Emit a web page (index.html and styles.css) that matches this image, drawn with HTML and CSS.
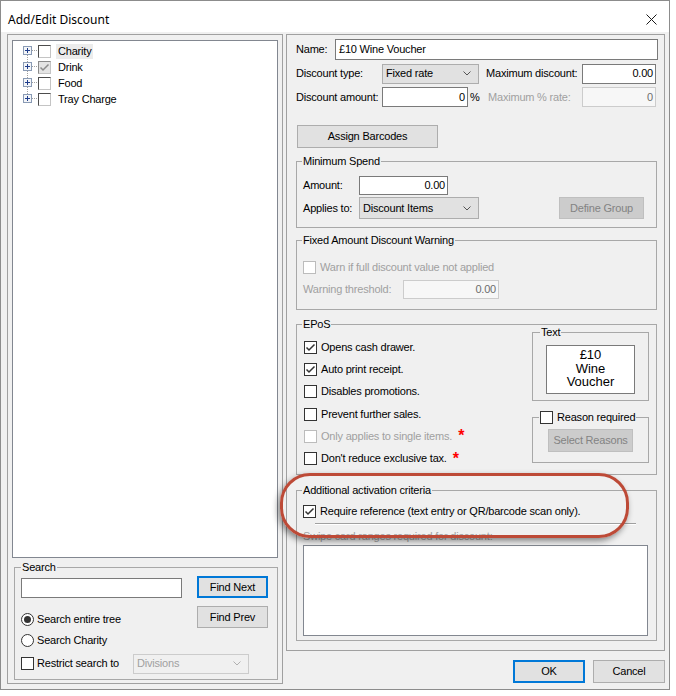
FILE: index.html
```html
<!DOCTYPE html>
<html lang="en">
<head>
<meta charset="utf-8">
<title>Add/Edit Discount</title>
<link rel="stylesheet" href="styles.css">
</head>
<body>
<div class="window">
  <div class="titlebar">
    <span class="title">Add/Edit Discount</span>
    <svg class="close" width="11" height="11" viewBox="0 0 11 11"><path d="M0.5 0.5L10.5 10.5M10.5 0.5L0.5 10.5" class="close-x"/></svg>
  </div>
  <div class="client">
    <div class="left-panel">
      <div class="tree">
        <div class="tree-row">
          <svg class="gutter" width="18" height="16" viewBox="0 0 18 16"><path d="M7.5 12v4M12 7.5h6" class="dots"/><rect x="3.5" y="3.5" width="8" height="8" class="exp"/><path d="M5 7.5h5M7.5 5v5" class="plus"/></svg>
          <span class="tcb"></span>
          <span class="tlabel sel">Charity</span>
        </div>
        <div class="tree-row">
          <svg class="gutter" width="18" height="16" viewBox="0 0 18 16"><path d="M7.5 0v3M7.5 12v4M12 7.5h6" class="dots"/><rect x="3.5" y="3.5" width="8" height="8" class="exp"/><path d="M5 7.5h5M7.5 5v5" class="plus"/></svg>
          <span class="tcb grey"><svg width="11" height="11" viewBox="0 0 11 11"><path d="M1.5 5.5L4 8L9.5 2.5" class="tick-grey"/></svg></span>
          <span class="tlabel">Drink</span>
        </div>
        <div class="tree-row">
          <svg class="gutter" width="18" height="16" viewBox="0 0 18 16"><path d="M7.5 0v3M7.5 12v4M12 7.5h6" class="dots"/><rect x="3.5" y="3.5" width="8" height="8" class="exp"/><path d="M5 7.5h5M7.5 5v5" class="plus"/></svg>
          <span class="tcb"></span>
          <span class="tlabel">Food</span>
        </div>
        <div class="tree-row">
          <svg class="gutter" width="18" height="16" viewBox="0 0 18 16"><path d="M7.5 0v3M12 7.5h6" class="dots"/><rect x="3.5" y="3.5" width="8" height="8" class="exp"/><path d="M5 7.5h5M7.5 5v5" class="plus"/></svg>
          <span class="tcb"></span>
          <span class="tlabel">Tray Charge</span>
        </div>
      </div>
      <fieldset class="group search-group">
        <legend>Search</legend>
        <div class="search-top">
          <div class="search-left">
            <div class="textbox search-box"></div>
            <div class="opt-row first-opt"><span class="radio on"></span><span class="opt-text">Search entire tree</span></div>
            <div class="opt-row"><span class="radio"></span><span class="opt-text">Search Charity</span></div>
          </div>
          <div class="search-right">
            <button class="btn default find">Find Next</button>
            <button class="btn find prev">Find Prev</button>
          </div>
        </div>
        <div class="restrict-row">
          <span class="cb"></span><span class="opt-text restrict-text">Restrict search to</span>
          <div class="combo disabled w-div"><span>Divisions</span><svg width="8" height="5" viewBox="0 0 8 5"><path d="M0.5 0.5L4 4L7.5 0.5" class="chev"/></svg></div>
        </div>
      </fieldset>
    </div>

    <div class="right-col">
      <div class="right-panel">
        <div class="row r-name">
          <span class="lbl w-name">Name:</span>
          <div class="textbox grow">£10 Wine Voucher</div>
        </div>
        <div class="row r-type">
          <span class="lbl w-86">Discount type:</span>
          <div class="combo w-type"><span>Fixed rate</span><svg width="8" height="5" viewBox="0 0 8 5"><path d="M0.5 0.5L4 4L7.5 0.5" class="chev"/></svg></div>
          <span class="lbl w-maxd">Maximum discount:</span>
          <div class="textbox num w-max">0.00</div>
        </div>
        <div class="row r-amt">
          <span class="lbl w-86">Discount amount:</span>
          <div class="textbox num w-amt">0</div>
          <span class="lbl w-pct">%</span>
          <span class="lbl dis w-maxr">Maximum % rate:</span>
          <div class="textbox num disabled w-max">0</div>
        </div>
        <button class="btn assign">Assign Barcodes</button>

        <fieldset class="group g-min">
          <legend>Minimum Spend</legend>
          <div class="row r-amount">
            <span class="lbl w-57">Amount:</span>
            <div class="textbox num w-89">0.00</div>
          </div>
          <div class="row r-applies">
            <span class="lbl w-57">Applies to:</span>
            <div class="combo w-120"><span>Discount Items</span><svg width="8" height="5" viewBox="0 0 8 5"><path d="M0.5 0.5L4 4L7.5 0.5" class="chev"/></svg></div>
            <button class="btn disabled define">Define Group</button>
          </div>
        </fieldset>

        <fieldset class="group g-fixed">
          <legend>Fixed Amount Discount Warning</legend>
          <div class="opt-row chk-row"><span class="cb disabled"></span><span class="opt-text dis">Warn if full discount value not applied</span></div>
          <div class="row r-thresh">
            <span class="lbl dis w-101">Warning threshold:</span>
            <div class="textbox num disabled w-96">0.00</div>
          </div>
        </fieldset>

        <fieldset class="group g-epos">
          <legend>EPoS</legend>
          <div class="epos-body">
            <div class="epos-list">
              <div class="opt-row epos-row"><span class="cb"><svg width="11" height="11" viewBox="0 0 11 11"><path d="M1.5 5.5L4 8L9.5 2.5" class="tick"/></svg></span><span class="opt-text">Opens cash drawer.</span></div>
              <div class="opt-row epos-row"><span class="cb"><svg width="11" height="11" viewBox="0 0 11 11"><path d="M1.5 5.5L4 8L9.5 2.5" class="tick"/></svg></span><span class="opt-text">Auto print receipt.</span></div>
              <div class="opt-row epos-row"><span class="cb"></span><span class="opt-text">Disables promotions.</span></div>
              <div class="opt-row epos-row"><span class="cb"></span><span class="opt-text">Prevent further sales.</span></div>
              <div class="opt-row epos-row"><span class="cb disabled"></span><span class="opt-text dis">Only applies to single items.</span><span class="req">*</span></div>
              <div class="opt-row epos-row"><span class="cb"></span><span class="opt-text">Don't reduce exclusive tax.</span><span class="req">*</span></div>
            </div>
            <div class="epos-side">
              <fieldset class="group g-text">
                <legend>Text</legend>
                <div class="text-preview">£10<br>Wine<br>Voucher</div>
              </fieldset>
              <fieldset class="group g-reason">
                <legend class="chk-legend"><span class="cb"></span><span class="opt-text">Reason required</span></legend>
                <button class="btn disabled reasons">Select Reasons</button>
              </fieldset>
            </div>
          </div>
        </fieldset>

        <fieldset class="group g-add">
          <legend>Additional activation criteria</legend>
          <div class="opt-row chk-row add-row"><span class="cb"><svg width="11" height="11" viewBox="0 0 11 11"><path d="M1.5 5.5L4 8L9.5 2.5" class="tick"/></svg></span><span class="opt-text">Require reference (text entry or QR/barcode scan only).</span></div>
          <div class="separator"></div>
          <div class="swipe-label dis">Swipe card ranges required for discount:</div>
          <div class="listbox"></div>
        </fieldset>
      </div>
      <div class="dialog-buttons">
        <button class="btn default dlg">OK</button>
        <button class="btn dlg">Cancel</button>
      </div>
    </div>
  </div>
  <div class="callout"></div>
</div>
</body>
</html>
```

FILE: styles.css
```css
* { box-sizing: border-box; }
html, body { margin: 0; padding: 0; background: #fff; }
body {
  font-family: "Liberation Sans", Arial, sans-serif;
  font-size: 11px;
  line-height: 13px;
  letter-spacing: -0.2px;
  color: #000;
}
button {
  font: inherit;
  letter-spacing: inherit;
  color: inherit;
  margin: 0;
  padding: 0;
  cursor: default;
}

.window {
  position: relative;
  width: 670px;
  height: 690px;
  border: 1px solid #8c8c8c;
  background: #f0f0f0;
  display: flex;
  flex-direction: column;
}
.titlebar {
  flex: none;
  height: 31px;
  background: #fff;
  display: flex;
  align-items: center;
  justify-content: space-between;
  padding: 6px 12px 0 7px;
}
.title {
  font-family: "Noto Sans", "Liberation Sans", sans-serif;
  font-size: 12px;
  line-height: 16px;
  letter-spacing: 0;
}
.close { display: block; }
.close-x { stroke: #1a1a1a; stroke-width: 1; fill: none; }

.client {
  flex: 1;
  display: flex;
  align-items: flex-start;
  gap: 3px;
  padding: 2px 0 0 6px;
}

/* ---------- left panel ---------- */
.left-panel {
  width: 276px;
  height: 650px;
  flex: none;
  border: 1px solid #a0a0a0;
  padding: 5px 4px 0;
  display: flex;
  flex-direction: column;
}
.tree {
  height: 518px;
  flex: none;
  background: #fff;
  border: 1px solid #828790;
  padding: 2px 0 0 7px;
}
.tree-row { display: flex; align-items: center; height: 16px; }
.gutter { display: block; flex: none; }
.dots { stroke: #a0a0a0; stroke-dasharray: 1 1; fill: none; }
.exp { fill: #f3f5f8; stroke: #8a9bb5; }
.plus { stroke: #1f3d8c; fill: none; }
.tcb {
  width: 13px;
  height: 13px;
  flex: none;
  border: 1px solid;
  border-color: #4d4d4d #c4c4c4 #c4c4c4 #4d4d4d;
  background: #fff;
  display: flex;
  align-items: center;
  justify-content: center;
}
.tcb.grey { background: #e4e4e4; border-color: #8a8a8a #c4c4c4 #c4c4c4 #8a8a8a; }
.tcb svg, .cb svg { display: block; }
.tick-grey { stroke: #8c8c8c; stroke-width: 1.5; fill: none; }
.tlabel { margin-left: 5px; padding: 1px 2px; line-height: 13px; }
.tlabel.sel { background: #ececec; }

/* ---------- group boxes ---------- */
.group {
  margin: 0;
  min-width: 0;
  border: 1px solid #a8a8a8;
  padding: 0 6px 6px 5px;
}
.group > legend {
  padding: 0 1px;
  line-height: 13px;
}

.search-group { margin: 3px 0 0 2px; width: 264px; padding: 2px 6px 6px 6px; }
.search-top { display: flex; gap: 15px; }
.search-left { width: 161px; }
.search-box { margin-top: 2px; height: 19px; }
.first-opt { margin-top: 13px; }
.search-left .opt-row + .opt-row { margin-top: 5px; }
.search-right { width: 71px; display: flex; flex-direction: column; }
.find { height: 22px; }
.prev { margin-top: 8px; }
.restrict-row { display: flex; align-items: center; height: 19px; margin-top: 6px; }
.restrict-text { width: 96px; }
.w-div { width: 116px; height: 19px; }

/* ---------- controls ---------- */
.textbox {
  background: #fff;
  border: 1px solid #7a7a7a;
  height: 20px;
  padding: 0 3px;
  display: flex;
  align-items: center;
  white-space: nowrap;
}
.textbox.num { justify-content: flex-end; padding-right: 2px; }
.textbox.disabled { border-color: #cccccc; background: #f7f7f7; color: #6d6d6d; }
.combo {
  background: #e1e1e1;
  border: 1px solid #adadad;
  height: 20px;
  padding: 0 7px 0 3px;
  display: flex;
  align-items: center;
  justify-content: space-between;
  white-space: nowrap;
}
.combo svg { display: block; }
.chev { stroke: #555; fill: none; }
.combo.disabled { background: #f0f0f0; border-color: #cccccc; color: #a0a0a0; }
.combo.disabled .chev { stroke: #b0b0b0; }
.btn {
  background: #e1e1e1;
  border: 1px solid #adadad;
  text-align: center;
  white-space: nowrap;
}
.btn.default { border: 2px solid #0078d7; }
.btn.disabled { background: #cccccc; border-color: #bfbfbf; color: #838383; }

.cb {
  width: 13px;
  height: 13px;
  flex: none;
  border: 1px solid #333;
  background: #fff;
  display: flex;
  align-items: center;
  justify-content: center;
}
.cb.disabled { border-color: #bcbcbc; }
.tick { stroke: #333; stroke-width: 1.5; fill: none; }
.radio {
  width: 13px;
  height: 13px;
  flex: none;
  border: 1px solid #333;
  border-radius: 50%;
  background: #fff;
  display: flex;
  align-items: center;
  justify-content: center;
}
.radio.on::after {
  content: "";
  width: 7px;
  height: 7px;
  border-radius: 50%;
  background: #333;
}
.opt-row { display: flex; align-items: center; height: 16px; }
.opt-text { margin-left: 3px; white-space: nowrap; }
.dis { color: #a0a0a0; }
.req {
  color: #ff0000;
  font-weight: bold;
  font-size: 16px;
  line-height: 16px;
  margin-left: 6px;
  align-self: flex-start;
  margin-top: 3px;
}

/* ---------- right panel ---------- */
.right-col { width: 379px; flex: none; display: flex; flex-direction: column; }
.right-panel {
  height: 617px;
  border: 1px solid #a0a0a0;
  padding: 4px 6px 0 9px;
}
.row { display: flex; align-items: center; }
.lbl { white-space: nowrap; flex: none; }
.r-name { height: 21px; }
.r-name .textbox { height: 21px; }
.w-name { width: 39px; }
.grow { flex: 1; }
.r-type { height: 21px; margin-top: 3px; }
.r-amt { height: 20px; margin-top: 3px; }
.w-86 { width: 86px; }
.w-type { width: 97px; margin-right: 7px; }
.w-maxd { width: 96px; }
.w-max { width: 74px; }
.w-amt { width: 86px; }
.w-pct { width: 20px; padding-left: 2px; }
.w-maxr { width: 94px; }
.assign { display: block; width: 141px; height: 23px; margin: 18px 0 0 1px; }

.right-panel .group { margin-right: 1px; }
.g-min { margin-top: 7px; padding-top: 8px; padding-bottom: 8px; }
.r-amount { height: 19px; }
.r-amount .textbox { height: 19px; }
.w-57 { width: 57px; padding-left: 1px; }
.w-89 { width: 89px; }
.r-applies { height: 22px; margin-top: 2px; }
.w-120 { width: 120px; height: 22px; }
.define { width: 85px; height: 22px; margin-left: auto; margin-right: 6px; }

.g-fixed { margin-top: 6px; padding-top: 12px; padding-bottom: 10px; }
.chk-row .cb { margin-left: 1px; }
.chk-row .opt-text { margin-left: 4px; }
.r-thresh { height: 19px; margin-top: 5px; }
.w-101 { width: 101px; padding-left: 1px; }
.w-96 { width: 96px; height: 19px; }

.g-epos { margin-top: 8px; padding-top: 0; padding-bottom: 4px; }
.epos-body { display: flex; }
.epos-list { padding-top: 5px; }
.epos-row { height: 22.33px; }
.epos-row .cb { margin-left: 2px; }
.epos-row .opt-text { margin-left: 4px; }
.epos-side { margin-left: auto; width: 118px; margin-top: -5px; }
.g-text { padding: 6px 6px 6px 6px; }
.g-text > legend { margin-left: 1px; }
.text-preview {
  width: 89px;
  height: 49px;
  margin: 0 auto;
  background: #fff;
  border: 1px solid #7a7a7a;
  text-align: center;
  font-size: 13px;
  line-height: 13.5px;
  letter-spacing: 0;
  padding-top: 2px;
}
.g-reason { margin-top: 10px; padding: 5px 6px 10px 6px; }
.chk-legend { display: flex; align-items: center; }
.chk-legend .opt-text { margin-left: 4px; }
.reasons { display: block; width: 85px; height: 23px; margin: 0 auto; }

.g-add { margin-top: 9px; padding-top: 7px; padding-bottom: 4px; }
.separator {
  height: 2px;
  margin: 3px 0 0 13px;
  width: 321px;
  border-top: 1px solid #a0a0a0;
  border-bottom: 1px solid #fff;
}
.swipe-label { margin-top: 5px; height: 13px; padding-left: 1px; white-space: nowrap; }
.listbox {
  margin: 2px 0 0 1px;
  width: 345px;
  height: 91px;
  background: #fff;
  border: 1px solid #828790;
}

.dialog-buttons { display: flex; justify-content: flex-end; gap: 8px; margin-top: 9px; }
.dlg { width: 72px; height: 23px; }

.callout {
  position: absolute;
  left: 279px;
  top: 472px;
  width: 349px;
  height: 65px;
  border: 3px solid #bd4a37;
  border-radius: 30px;
  box-shadow: -2px 3px 6px rgba(0, 0, 0, 0.45);
  pointer-events: none;
}
```
